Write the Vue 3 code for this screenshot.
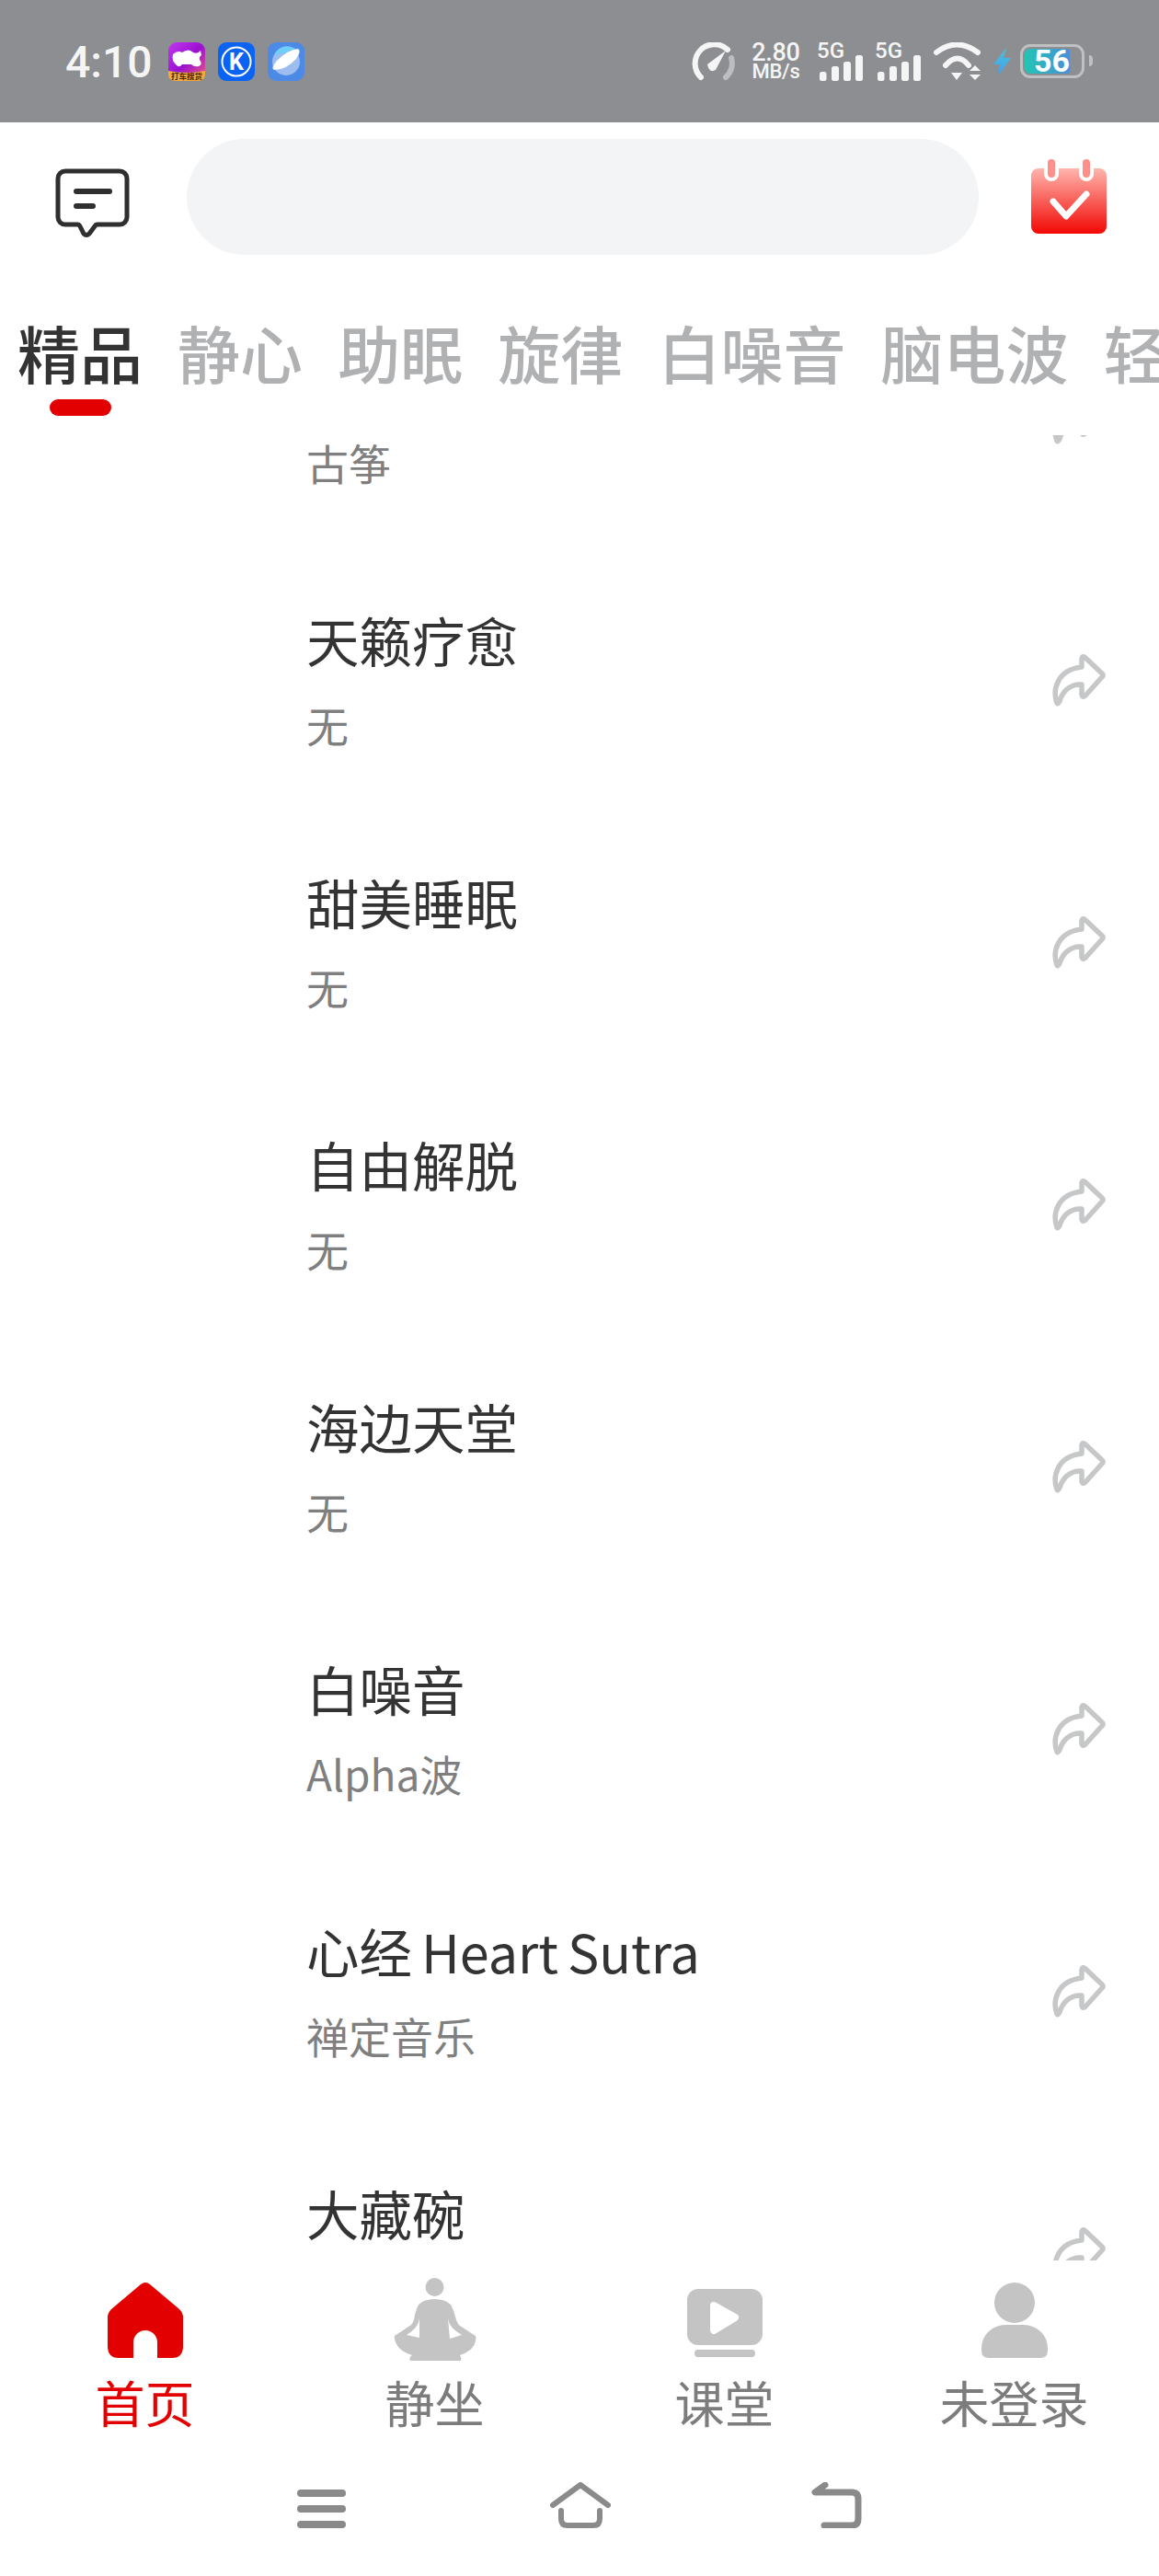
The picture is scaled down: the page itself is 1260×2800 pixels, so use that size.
<script setup>
const tabs = [
  { label: '精品', active: true },
  { label: '静心' },
  { label: '助眠' },
  { label: '旋律' },
  { label: '白噪音' },
  { label: '脑电波' },
  { label: '轻音乐' }
]
const rows = [
  { title: '古筝音乐', sub: '古筝' },
  { title: '天籁疗愈', sub: '无' },
  { title: '甜美睡眠', sub: '无' },
  { title: '自由解脱', sub: '无' },
  { title: '海边天堂', sub: '无' },
  { title: '白噪音', sub: 'Alpha波' },
  { title: '心经 Heart Sutra', sub: '禅定音乐' },
  { title: '大藏碗', sub: '无' }
]
</script>

<template>
  <div class="page">
    <header class="status">
      <span class="time">4:10</span>
      <div class="apps">
        <svg class="app" viewBox="0 0 40 42">
          <defs>
            <linearGradient id="appA" x1="0" y1="0" x2="1" y2="1">
              <stop offset="0" stop-color="#c238f0" />
              <stop offset="0.5" stop-color="#9a10d0" />
              <stop offset="1" stop-color="#f4607a" />
            </linearGradient>
          </defs>
          <rect width="40" height="42" rx="9" fill="url(#appA)" />
          <path d="M0 31 Q20 35 40 31 V34 Q40 42 32 42 H8 Q0 42 0 34Z" fill="#f7ab3c" />
          <path d="M5 13 Q10 8 15 11 Q22 6 27 11 Q32 13 35 9 L36 14 Q33 16 34 19 Q38 24 33 26 Q28 27 25 24 H15 Q12 28 9 25 Q3 20 5 13Z" fill="#fff" />
          <text x="20" y="40" text-anchor="middle" class="app-text">打车搜货</text>
        </svg>
        <svg class="app" viewBox="0 0 40 42">
          <rect width="40" height="42" rx="9" fill="#0a63f2" />
          <circle cx="20" cy="21" r="15.5" fill="none" stroke="#fff" stroke-width="2" />
          <text x="20" y="30" text-anchor="middle" class="k-text">K</text>
        </svg>
        <svg class="app" viewBox="0 0 40 42">
          <rect width="40" height="42" rx="9" fill="#4c8ae6" />
          <circle cx="20" cy="21" r="15" fill="#9dbdf0" />
          <path d="M7 14 A15 15 0 0 1 32 9 Z" fill="#72cdf8" />
          <path d="M7 30 Q3 28 10 20 Q22 8 33 7 Q37 9 31 18 Q20 30 7 30Z" fill="#fff" />
        </svg>
      </div>
      <div class="indicators">
        <svg class="gauge" viewBox="0 0 47 42">
          <path d="M10 38 A20 20 0 0 1 39 8" fill="none" stroke="#f5f5f5" stroke-width="6" stroke-linecap="round" />
          <path d="M43 17 A20 20 0 0 1 37 38" fill="none" stroke="#bcbdbf" stroke-width="6" stroke-linecap="round" />
          <path d="M17 24 L37 9 L26 30 Q19 34 17 24Z" fill="#f5f5f5" />
        </svg>
        <div class="speed">
          <span class="speed-top">2.80</span>
          <span class="speed-unit">MB/s</span>
        </div>
        <div v-for="n in 2" :key="n" class="signal">
          <span class="five-g">5G</span>
          <svg class="bars" viewBox="0 0 47 28">
            <rect x="0" y="18" width="7.5" height="10" rx="2.5" />
            <rect x="13" y="12" width="8" height="16" rx="2.5" />
            <rect x="26" y="7" width="8" height="21" rx="2.5" />
            <rect x="39" y="0" width="8" height="28" rx="2.5" />
          </svg>
        </div>
        <svg class="wifi" viewBox="0 0 51 42">
          <path d="M3 11 Q25 -6 48 11" fill="none" stroke="#f5f5f5" stroke-width="6" stroke-linecap="round" />
          <path d="M13 25 Q26 10 38 25" fill="none" stroke="#f5f5f5" stroke-width="6" stroke-linecap="round" />
          <path d="M19 33 H31 L25 41Z M39 31 L45 25 L51 31Z M39 35 H51 L45 41Z" fill="#f5f5f5" />
        </svg>
        <svg class="bolt" viewBox="0 0 19 30">
          <defs>
            <linearGradient id="boltG" x1="0" y1="0" x2="0" y2="1">
              <stop offset="0" stop-color="#4cc3d8" />
              <stop offset="1" stop-color="#3f9ef0" />
            </linearGradient>
          </defs>
          <path d="M14 0 L0 18 H7 L5 30 L19 11 H11Z" fill="url(#boltG)" />
        </svg>
        <div class="battery">
          <div class="battery-body">
            <div class="battery-fill"></div>
            <span class="battery-num">56</span>
          </div>
          <div class="battery-nub"></div>
        </div>
      </div>
    </header>

    <div class="search-row">
      <svg class="chat" viewBox="0 0 82 76">
        <path d="M11 3 H70 a8 8 0 0 1 8 8 V53 a8 8 0 0 1 -8 8 H46 q-2 0 -3 2 L37 71 q-3 3 -6 0 L27 63 q-1 -2 -3 -2 H11 a8 8 0 0 1 -8 -8 V11 a8 8 0 0 1 8 -8Z" fill="none" stroke="#2f2f2f" stroke-width="5" />
        <path d="M23 25 H59 M23 41 H41" stroke="#2f2f2f" stroke-width="6" stroke-linecap="round" />
      </svg>
      <div class="search-pill"></div>
      <svg class="calendar" viewBox="0 0 82 81">
        <defs>
          <linearGradient id="calG" x1="0" y1="0" x2="0" y2="1">
            <stop offset="0" stop-color="#ffb5ad" />
            <stop offset="1" stop-color="#f20804" />
          </linearGradient>
        </defs>
        <rect x="0" y="10" width="82" height="71" rx="8" fill="url(#calG)" />
        <rect x="14" y="-4" width="16" height="28" rx="8" fill="#fff" />
        <rect x="52" y="-4" width="16" height="28" rx="8" fill="#fff" />
        <rect x="18" y="0" width="8" height="20" rx="4" fill="#ff8f88" />
        <rect x="56" y="0" width="8" height="20" rx="4" fill="#ff8f88" />
        <path d="M24 46 L38 62 L60 38" fill="none" stroke="#fff" stroke-width="7" stroke-linecap="round" stroke-linejoin="round" />
      </svg>
    </div>

    <nav class="tabs">
      <div v-for="t in tabs" :key="t.label" class="tab" :class="{ active: t.active }">
        <span class="tab-text">{{ t.label }}</span>
        <span class="tab-line"></span>
      </div>
    </nav>

    <section class="list">
      <div class="list-inner">
        <div v-for="r in rows" :key="r.title" class="row">
          <div class="row-text">
            <div class="row-title">{{ r.title }}</div>
            <div class="row-sub">{{ r.sub }}</div>
          </div>
          <svg class="share" viewBox="0 0 60 60">
            <path d="M6 54 C1 40 6 18 33 15 V6 Q34 2 37 5 L55 22 Q57 24 55 26 L37 46 Q34 49 33 45 V34 C20 33 12 42 9 52 Q7 56 6 54Z" fill="none" stroke="#c6c7c8" stroke-width="5.5" stroke-linejoin="round" />
          </svg>
        </div>
      </div>
    </section>

    <footer class="tabbar">
      <div class="bar-item active">
        <div class="bar-icon">
          <svg class="i-home" viewBox="0 0 82 83">
            <path d="M36 3 Q41 -1 46 3 L78 30 Q82 34 82 39 V70 Q82 83 70 83 H54 V66 A13 13 0 0 0 28 66 V83 H12 Q0 83 0 70 V39 Q0 34 4 30Z" fill="#e30000" />
          </svg>
        </div>
        <span class="bar-label">首页</span>
      </div>
      <div class="bar-item">
        <div class="bar-icon">
          <svg class="i-med" viewBox="0 0 90 90">
            <ellipse cx="44.5" cy="10" rx="10" ry="10" fill="#c4c4c4" />
            <path fill-rule="evenodd" fill="#c4c4c4" d="M44 23 Q56 23 62 29 Q65 34 67 42 Q69 50 72 52 L89 63 Q90 66 88 72 Q84 80 72 84 Q74 87 73 90 H18 Q16 87 20 84 Q7 80 3 72 Q0 66 1 63 L19 51 Q22 48 23 40 Q25 33 27 29 Q33 23 44 23Z M28 44 Q27 54 14 62 L28 65Z M59 44 Q60 54 74 62 L61 66Z" />
          </svg>
        </div>
        <span class="bar-label">静坐</span>
      </div>
      <div class="bar-item">
        <div class="bar-icon">
          <svg class="i-video" viewBox="0 0 82 74">
            <rect width="82" height="61" rx="12" fill="#c4c4c4" />
            <rect x="8" y="66" width="66" height="8" rx="4" fill="#c4c4c4" />
            <path d="M29 18 L52 31 L29 45Z" fill="#fff" stroke="#fff" stroke-width="8" stroke-linejoin="round" />
          </svg>
        </div>
        <span class="bar-label">课堂</span>
      </div>
      <div class="bar-item">
        <div class="bar-icon">
          <svg class="i-user" viewBox="0 0 72 82">
            <ellipse cx="36" cy="22" rx="22" ry="22" fill="#c4c4c4" />
            <path d="M0 72 C0 55 14 46 26 46 H46 C58 46 72 55 72 72 V74 Q72 82 64 82 H8 Q0 82 0 74Z" fill="#c4c4c4" />
          </svg>
        </div>
        <span class="bar-label">未登录</span>
      </div>
    </footer>

    <div class="sysnav">
      <svg class="n-menu" viewBox="0 0 53 42">
        <rect width="53" height="8" rx="4" />
        <rect y="17" width="53" height="8" rx="4" />
        <rect y="34" width="53" height="8" rx="4" />
      </svg>
      <svg class="n-home" viewBox="0 0 66 50">
        <path d="M3 25 L33 3 L63 25 M12 31 V40 Q12 47 19 47 H47 Q54 47 54 40 V31" fill="none" stroke="#8a8a8a" stroke-width="6" stroke-linecap="round" stroke-linejoin="round" />
      </svg>
      <svg class="n-back" viewBox="0 0 56 50">
        <path d="M15 3 L4 11 H44 Q51 11 51 18 V40 Q51 47 44 47 H14" fill="none" stroke="#8a8a8a" stroke-width="7" stroke-linecap="round" stroke-linejoin="round" />
      </svg>
    </div>
  </div>
</template>

<style>
html, body { margin: 0; background: #fff; }
</style>

<style scoped>
.page {
  width: 1260px;
  height: 2800px;
  display: flex;
  flex-direction: column;
  overflow: hidden;
  background: #fff;
  font-family: "Noto Sans CJK SC", "Noto Sans", sans-serif;
}

/* status bar */
.status {
  height: 133px;
  flex: none;
  background: #8d8e91;
  display: flex;
  align-items: center;
  padding: 0 72px 0 71px;
  box-sizing: border-box;
  color: #f5f5f5;
}
.time {
  font-family: Roboto, sans-serif;
  font-size: 48px;
  font-weight: 500;
  width: 112px;
  line-height: 48px;
  margin-top: 3px;
}
.apps { display: flex; gap: 14px; }
.app { width: 40px; height: 42px; display: block; }
.app-text { font-size: 8.5px; font-weight: 700; fill: #4a2500; }
.k-text { font-family: Roboto, sans-serif; font-size: 25px; font-weight: 700; fill: #fff; }
.indicators {
  margin-left: auto;
  display: flex;
  align-items: flex-end;
  height: 42px;
}
.gauge { width: 47px; height: 42px; display: block; }
.speed {
  display: flex;
  flex-direction: column;
  width: 53px;
  margin-left: 18px;
  font-family: Roboto, sans-serif;
  font-weight: 500;
  align-items: center;
}
.speed-top { font-size: 27px; line-height: 22px; letter-spacing: -0.3px; }
.speed-unit { font-size: 22px; line-height: 20px; letter-spacing: -0.3px; }
.signal { position: relative; width: 47px; height: 42px; margin-left: 21px; }
.signal + .signal { margin-left: 16px; }
.five-g {
  position: absolute;
  left: -3px;
  top: -3px;
  font-family: Roboto, sans-serif;
  font-size: 24px;
  line-height: 24px;
  font-weight: 500;
}
.bars { position: absolute; left: 0; bottom: 0; width: 47px; height: 28px; fill: #f5f5f5; }
.wifi { width: 51px; height: 42px; margin-left: 14px; display: block; }
.bolt { width: 19px; height: 30px; margin-left: 14px; margin-bottom: 6px; display: block; }
.battery { display: flex; align-items: center; margin-left: 10px; margin-bottom: 3px; }
.battery-body {
  position: relative;
  width: 70px;
  height: 37px;
  box-sizing: border-box;
  border: 3px solid #bfc0c2;
  border-radius: 11px;
  padding: 2px;
}
.battery-fill {
  width: 49px;
  height: 100%;
  border-radius: 6px 2px 2px 6px;
  background: linear-gradient(90deg, #23c4b4, #4a8fd8);
}
.battery-num {
  position: absolute;
  left: 12px;
  top: -3px;
  font-family: Roboto, sans-serif;
  font-size: 34px;
  line-height: 37px;
  font-weight: 700;
  color: #fff;
}
.battery-nub { width: 4px; height: 12px; background: #bfc0c2; border-radius: 0 4px 4px 0; margin-left: 5px; }

/* search */
.search-row {
  flex: none;
  display: flex;
  align-items: flex-start;
  padding: 18px 57px 0 60px;
}
.chat { width: 82px; height: 76px; margin-top: 32px; flex: none; }
.search-pill {
  width: 861px;
  height: 126px;
  margin: 0 57px 0 61px;
  border-radius: 63px;
  background: #f3f4f6;
  flex: none;
}
.calendar { width: 82px; height: 81px; margin-top: 22px; flex: none; overflow: visible; }

/* tabs */
.tabs {
  flex: none;
  display: flex;
  gap: 38.1px;
  padding: 66px 0 21px 19px;
  overflow: hidden;
  height: 196px;
  box-sizing: border-box;
}
.tab { display: flex; flex-direction: column; align-items: center; flex: none; }
.tab-text {
  font-size: 68px;
  line-height: 80px;
  font-weight: 500;
  color: #b0b1b3;
}
.tab-line { width: 67px; height: 18px; margin-top: 11px; border-radius: 9px; flex: none; }
.tab.active .tab-text { color: #333; }
.tab.active .tab-line { background: #e30000; }

/* list */
.list { height: 1984px; flex: none; overflow: hidden; }
.list-inner { margin-top: -157px; }
.row {
  height: 285px;
  display: flex;
  align-items: center;
  justify-content: space-between;
  padding: 0 57px 0 333px;
  box-sizing: border-box;
}
.row-text { margin-bottom: 10px; }
.row-title {
  font-size: 57.5px;
  line-height: 70px;
  color: #333;
  white-space: nowrap;
  word-spacing: -3px;
}
.row-sub {
  font-size: 46px;
  line-height: 60px;
  margin-top: 27px;
  color: #7f7f7f;
}
.share { width: 60px; height: 60px; margin-bottom: 8px; flex: none; }

/* bottom tabs */
.tabbar {
  flex: none;
  display: grid;
  grid-template-columns: repeat(4, 1fr);
  padding-top: 19px;
}
.bar-item { display: flex; flex-direction: column; align-items: center; }
.bar-icon {
  height: 90px;
  display: flex;
  align-items: flex-end;
  justify-content: center;
  padding-bottom: 3px;
  box-sizing: border-box;
}
.i-home { width: 82px; height: 83px; display: block; }
.i-med { width: 90px; height: 90px; display: block; margin-bottom: -3px; }
.i-video { width: 82px; height: 74px; display: block; margin-bottom: 1px; }
.i-user { width: 72px; height: 82px; display: block; }
.bar-label {
  font-size: 54px;
  line-height: 60px;
  margin-top: 15px;
  color: #7c7c7c;
}
.bar-item.active .bar-label { color: #e30000; }

/* system nav */
.sysnav {
  flex: none;
  display: flex;
  align-items: flex-end;
  height: 50px;
  margin-top: 57px;
  padding-left: 323px;
}
.n-menu { width: 53px; height: 42px; fill: #8a8a8a; margin-right: 222px; display: block; }
.n-home { width: 66px; height: 50px; margin-right: 218px; display: block; }
.n-back { width: 56px; height: 50px; display: block; }
</style>
